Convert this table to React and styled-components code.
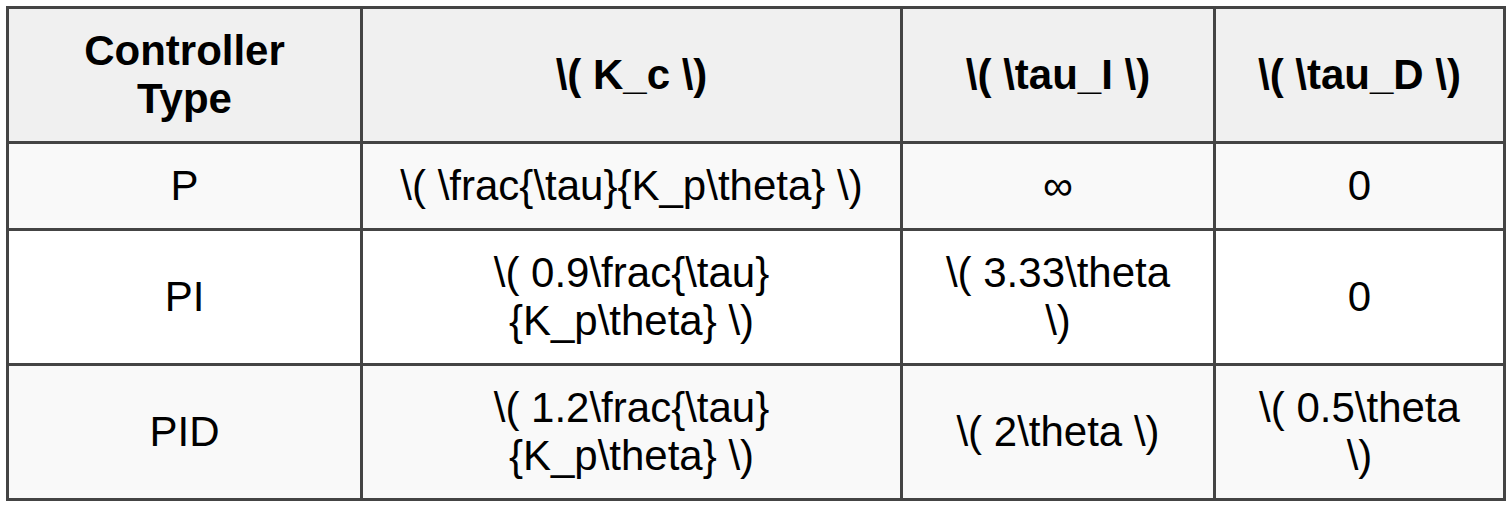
import React from "react";
import styled, { createGlobalStyle } from "styled-components";

const rows = [
  { type: "P", kc: "\\( \\frac{\\tau}{K_p\\theta} \\)", ti: "∞", td: "0" },
  { type: "PI", kc: "\\( 0.9\\frac{\\tau}{K_p\\theta} \\)", ti: "\\( 3.33\\theta \\)", td: "0" },
  { type: "PID", kc: "\\( 1.2\\frac{\\tau}{K_p\\theta} \\)", ti: "\\( 2\\theta \\)", td: "\\( 0.5\\theta \\)" },
];

const App = () => {
  return (
    <Wrapper>
      <GlobalStyle />
      <Table>
        <colgroup>
          <col style={{ width: 354 }} />
          <col style={{ width: 540 }} />
          <col style={{ width: 313 }} />
          <col style={{ width: 290 }} />
        </colgroup>
        <thead>
          <tr>
            <Th>Controller Type</Th>
            <Th>{"\\( K_c \\)"}</Th>
            <Th>{"\\( \\tau_I \\)"}</Th>
            <Th>{"\\( \\tau_D \\)"}</Th>
          </tr>
        </thead>
        <tbody>
          {rows.map((row) => (
            <Row key={row.type}>
              <Td>{row.type}</Td>
              <Td>{row.kc}</Td>
              <Td>{row.ti}</Td>
              <Td>{row.td}</Td>
            </Row>
          ))}
        </tbody>
      </Table>
    </Wrapper>
  );
};

const GlobalStyle = createGlobalStyle`
  body {
    margin: 0;
    background: #fff;
    font-family: "Liberation Sans", Arial, sans-serif;
  }
`;

const Wrapper = styled.div`
  padding: 6px;
`;

const Table = styled.table`
  width: 1500px;
  table-layout: fixed;
  border-collapse: collapse;
  border: 3px solid #444;
  font-size: 42px;
  line-height: 48px;
  color: #000;
`;

const Th = styled.th`
  border: 3px solid #444;
  background: #f0f0f0;
  padding: 18px 30px;
  font-weight: bold;
  text-align: center;
`;

const Row = styled.tr`
  background: #fff;
  &:nth-child(odd) {
    background: #f9f9f9;
  }
`;

const Td = styled.td`
  border: 3px solid #444;
  padding: 18px 30px;
  text-align: center;
  vertical-align: middle;
`;

export default App;
